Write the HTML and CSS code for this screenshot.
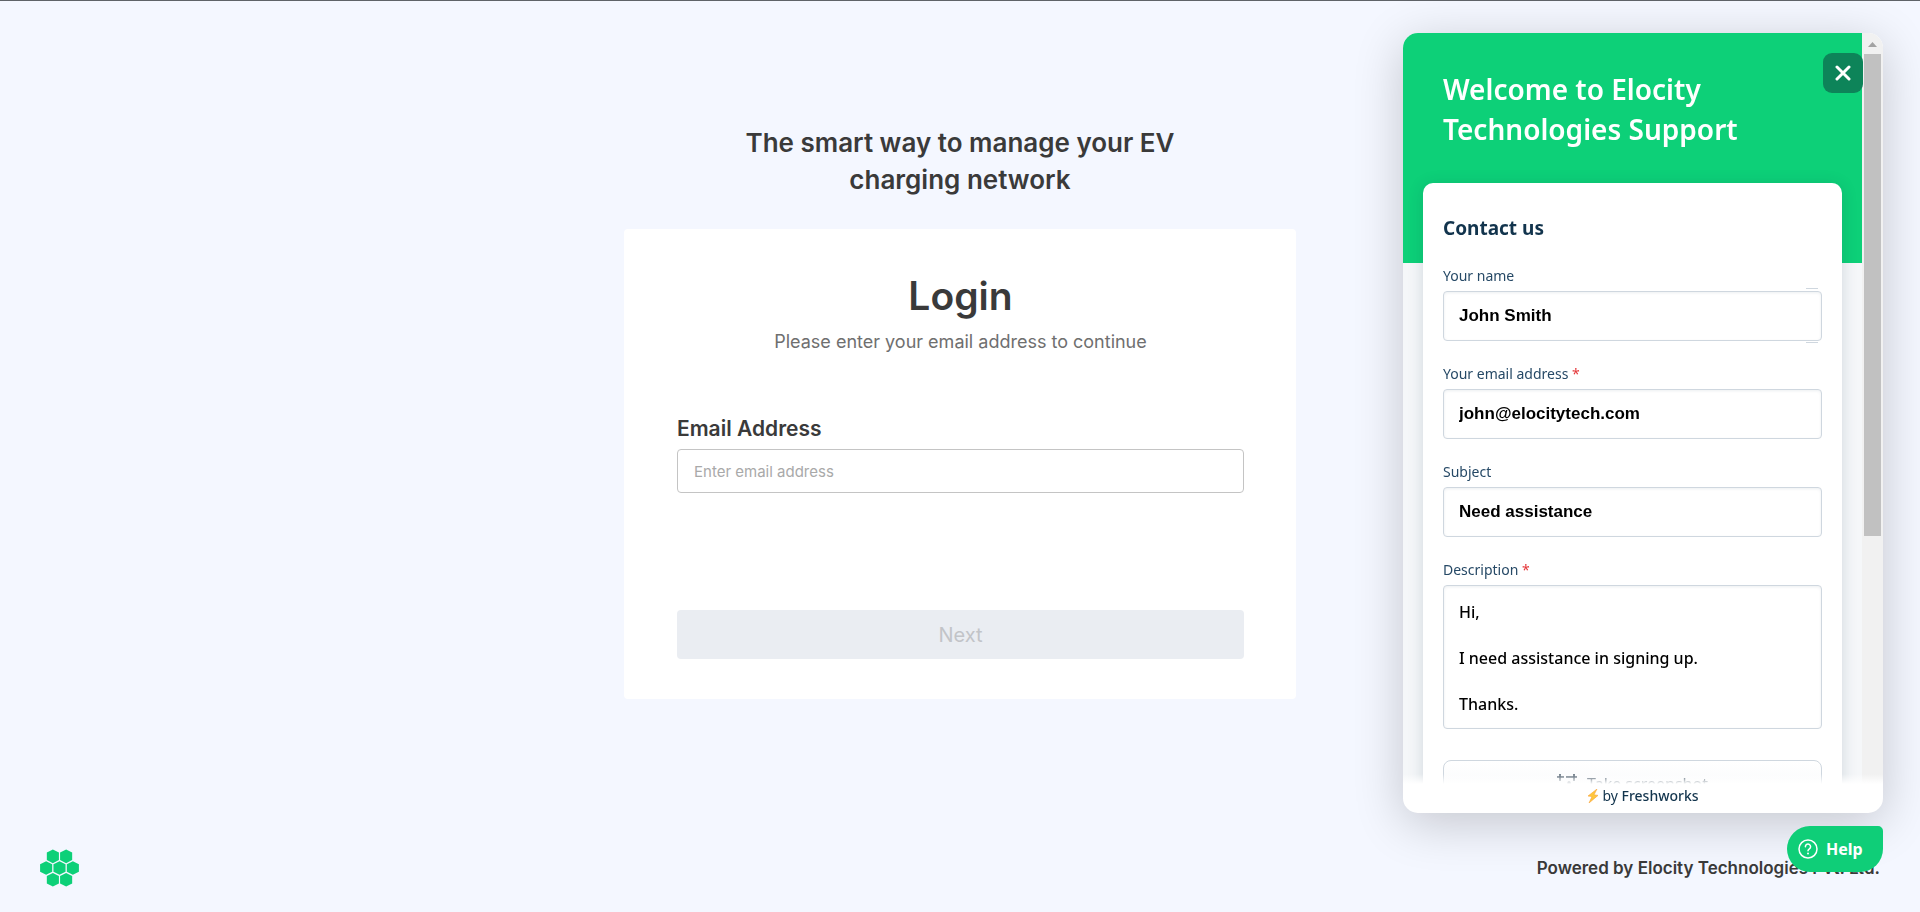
FILE: index.html
```html
<!DOCTYPE html>
<html lang="en">
<head>
    <meta charset="UTF-8">
    <meta name="viewport" content="width=device-width, initial-scale=1.0">
    <title>Login</title>
    <link rel="stylesheet" href="styles.css">
</head>
<body>
    <main class="page">
        <h2 class="tagline">The smart way to manage your EV charging network</h2>
        <form class="login-card">
            <h1>Login</h1>
            <p class="subtitle">Please enter your email address to continue</p>
            <label for="email">Email Address</label>
            <input type="email" id="email" placeholder="Enter email address">
            <button type="submit" class="next-btn" disabled>Next</button>
        </form>
    </main>

    <footer class="footer">
        <svg class="logo" viewBox="0 0 40 38" fill="#0dd078" role="img" aria-label="Elocity">
            <defs>
                <path id="hex" d="M0 -7 L6.2 -3.8 V3.8 L0 7 L-6.2 3.8 V-3.8 Z"/>
            </defs>
            <use href="#hex" x="13.2" y="7"/>
            <use href="#hex" x="26.8" y="7"/>
            <use href="#hex" x="6.3" y="19"/>
            <use href="#hex" x="20" y="19"/>
            <use href="#hex" x="33.7" y="19"/>
            <use href="#hex" x="13.2" y="31"/>
            <use href="#hex" x="26.8" y="31"/>
        </svg>
        <span>Powered by Elocity Technologies Pvt. Ltd.</span>
    </footer>

    <section class="widget">
        <div class="widget-body">
            <div class="widget-scroll">
                <h2 class="widget-title">Welcome to Elocity Technologies Support</h2>
                <form class="contact-card">
                    <h3>Contact us</h3>
                    <div class="field field-name">
                        <label for="name">Your name</label>
                        <input type="text" id="name" value="John Smith">
                    </div>
                    <div class="field">
                        <label for="contact-email">Your email address <span class="required">*</span></label>
                        <input type="text" id="contact-email" value="john@elocitytech.com">
                    </div>
                    <div class="field">
                        <label for="subject">Subject</label>
                        <input type="text" id="subject" value="Need assistance">
                    </div>
                    <div class="field">
                        <label for="description">Description <span class="required">*</span></label>
                        <textarea id="description">Hi,

I need assistance in signing up.

Thanks.</textarea>
                    </div>
                    <button type="button" class="screenshot-btn">
                        <svg width="20" height="20" viewBox="0 0 20 20" fill="none" stroke="currentColor" stroke-width="1.5">
                            <path d="M0 3H7M3 0V7M3 13V20M9 3H20M17 0V7M17 13V20M0 17H7M9 17H20"/>
                            <circle cx="12" cy="9" r="1"/>
                        </svg>
                        Take screenshot
                    </button>
                </form>
            </div>
            <div class="scrollbar">
                <div class="scroll-arrow"></div>
                <div class="scroll-thumb"></div>
            </div>
        </div>
        <div class="widget-footer">
            <svg width="12" height="14" viewBox="0 0 12 14">
                <path d="M10 0 L1 7 L5 7.6 L2 14 L11 6.4 L7 5.8 Z" fill="#ffc83d" stroke="#f9a33a" stroke-width="0.6"/>
            </svg>
            <span>by <b>Freshworks</b></span>
        </div>
        <button class="close-btn" aria-label="Close">
            <svg width="16" height="16" viewBox="0 0 16 16" stroke="#fff" stroke-width="3" stroke-linecap="round">
                <path d="M2 2L14 14M14 2L2 14"/>
            </svg>
        </button>
    </section>

    <button class="help-btn">
        <svg width="20" height="20" viewBox="0 0 20 20" fill="none" stroke="#fff" stroke-width="1.5" stroke-linecap="round">
            <circle cx="10" cy="10" r="9"/>
            <path d="M7.4 7.7a2.6 2.6 0 1 1 4 2.1c-.9.6-1.4 1-1.4 2"/>
            <path d="M10 14.4v.2" stroke-width="2"/>
        </svg>
        Help
    </button>
</body>
</html>
```
FILE: styles.css
```css
* {
    box-sizing: border-box;
}
body {
    margin: 0;
    min-height: 100vh;
    display: flex;
    flex-direction: column;
    justify-content: space-between;
    background-color: #f4f7ff;
    border-top: 1px solid #5f6368;
    font-family: Inter, sans-serif;
    color: #3a3a3a;
}
h1, h2, h3, p {
    margin: 0;
}
input, textarea, button {
    font-family: inherit;
}
button {
    cursor: pointer;
}
.page {
    display: flex;
    flex-direction: column;
    align-items: center;
    padding-top: 123px;
}
.tagline {
    max-width: 480px;
    font-size: 26px;
    line-height: 37px;
    font-weight: 600;
    text-align: center;
    margin-bottom: 31px;
}
.login-card {
    width: 35%;
    min-width: 400px;
    background-color: #fff;
    border-radius: 4px;
    padding: 43px 52px 40px 53px;
    display: flex;
    flex-direction: column;
}
.login-card h1 {
    font-size: 39px;
    line-height: 48px;
    font-weight: 600;
    text-align: center;
}
.subtitle {
    font-size: 18px;
    line-height: 24px;
    margin-top: 10px;
    color: #6f6f6f;
    text-align: center;
}
.login-card label {
    font-size: 21px;
    line-height: 24px;
    font-weight: 600;
    margin-top: 63px;
    margin-bottom: 8px;
}
.login-card input {
    height: 44px;
    padding: 0 16px;
    border: 1px solid #c4c4c4;
    border-radius: 4px;
    font-size: 15px;
}
.login-card input::placeholder {
    color: #a9a9a9;
}
.next-btn {
    height: 49px;
    margin-top: 117px;
    border: none;
    border-radius: 4px;
    background-color: #eaedf2;
    color: #c2c4c8;
    font-size: 20px;
    font-weight: 400;
}
.footer {
    display: flex;
    align-items: center;
    justify-content: space-between;
    padding: 0 40px 25px;
    font-size: 17px;
    font-weight: 600;
}
.logo {
    width: 39px;
    height: 38px;
}

/* Support widget */
.widget {
    position: fixed;
    top: 33px;
    right: 37px;
    bottom: 99px;
    width: 480px;
    display: flex;
    flex-direction: column;
    border-radius: 15px;
    overflow: hidden;
    background-color: #fff;
    box-shadow: 0 10px 50px rgba(0, 0, 0, 0.2);
    font-family: "Noto Sans", sans-serif;
    color: #12344d;
}
.widget-body {
    flex: 1;
    min-height: 0;
    display: flex;
    position: relative;
}
.widget-body::after {
    content: "";
    position: absolute;
    left: 0;
    right: 0;
    bottom: 0;
    height: 10px;
    background: linear-gradient(rgba(255, 255, 255, 0), #fff);
}
.widget-scroll {
    flex: 1;
    overflow: hidden;
    padding: 36px 20px 0;
    background: linear-gradient(#0dd078 230px, #f5f7f9 230px);
}
.widget-title {
    padding: 0 20px;
    font-size: 28px;
    line-height: 40px;
    font-weight: 600;
    color: #fff;
}
.contact-card {
    margin-top: 34px;
    padding: 32px 20px;
    background-color: #fff;
    border-radius: 10px;
    box-shadow: 0 2px 16px rgba(18, 52, 77, 0.16);
}
.contact-card h3 {
    font-size: 19px;
    line-height: 26px;
    font-weight: 700;
    margin-bottom: 25px;
}
.field {
    display: flex;
    flex-direction: column;
    margin-bottom: 23px;
    position: relative;
}
.field label {
    font-size: 14px;
    line-height: 20px;
    margin-bottom: 5px;
    color: #264966;
}
.required {
    color: #e43538;
}
.field input, .field textarea {
    border: 1px solid #cfd7df;
    border-radius: 4px;
    padding: 0 15px;
    background-color: #fff;
    box-shadow: inset 0 1px 3px rgba(18, 52, 77, 0.08);
    color: #000;
}
.field input {
    height: 50px;
    font-family: "Liberation Sans", Arial, sans-serif;
    font-size: 17px;
    font-weight: 700;
}
.field textarea {
    height: 144px;
    padding-top: 15px;
    font-size: 16px;
    line-height: 23px;
    font-weight: 500;
    resize: none;
    overflow: hidden;
}
.field-name::after {
    content: "";
    position: absolute;
    right: 4px;
    bottom: -2px;
    width: 12px;
    height: 53px;
    border-top: 1px solid #cfd7df;
    border-bottom: 1px solid #cfd7df;
    pointer-events: none;
}
.screenshot-btn {
    width: 100%;
    height: 48px;
    margin-top: 31px;
    display: flex;
    align-items: center;
    justify-content: center;
    gap: 10px;
    border: 1px solid #cfd7df;
    border-radius: 8px;
    background: linear-gradient(#fff, #f5f7f9);
    color: #475867;
    font-size: 16px;
}
.scrollbar {
    width: 21px;
    padding: 9px 2px 0;
    background-color: #f1f1f1;
}
.scroll-arrow {
    width: 9px;
    height: 5px;
    margin: 0 auto 7px;
    background-color: #a3a3a3;
    clip-path: polygon(50% 0, 100% 100%, 0 100%);
}
.scroll-thumb {
    height: 65%;
    background-color: #c1c1c1;
}
.widget-footer {
    height: 29px;
    padding-bottom: 5px;
    display: flex;
    align-items: center;
    justify-content: center;
    gap: 3px;
    font-size: 14px;
    line-height: 18px;
}
.widget-footer b {
    font-weight: 500;
}
.close-btn {
    position: absolute;
    top: 20px;
    right: 20px;
    width: 40px;
    height: 40px;
    padding: 0;
    display: flex;
    align-items: center;
    justify-content: center;
    border: none;
    border-radius: 9px;
    background-color: #0d8459;
}
.help-btn {
    position: fixed;
    right: 37px;
    bottom: 40px;
    width: 96px;
    height: 46px;
    padding: 0 0 0 11px;
    display: flex;
    align-items: center;
    gap: 8px;
    border: none;
    border-radius: 23px 5px 23px 23px;
    background-color: #0fce78;
    color: #fff;
    font-family: "Noto Sans", sans-serif;
    font-size: 16px;
    font-weight: 700;
}
```
